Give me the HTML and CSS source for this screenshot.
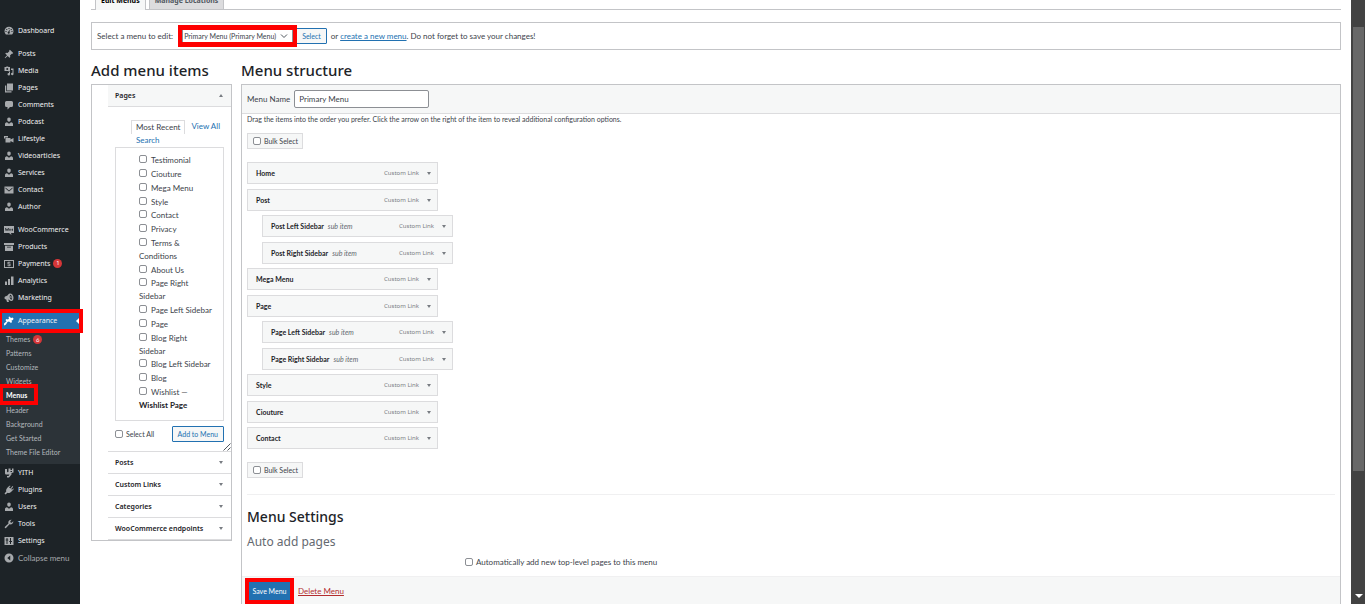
FILE: index.html
```html
<!DOCTYPE html>
<html lang="en">
<head>
<meta charset="utf-8">
<title>Menus</title>
<link rel="stylesheet" href="styles.css">
</head>
<body>
<svg class="sprite" aria-hidden="true">
  <symbol id="i-dash" viewBox="0 0 20 20"><path fill-rule="evenodd" d="M3.8 17A9 9 0 1 1 16.200 17zM9 4h2v2H9zM4.500 6h2v2h-2zM13.500 6h2v2h-2zM3 10h2v2H3zM15 10h2v2h-2zM12 7l-1 5a2 2 0 1 1-2.500-.5z"/></symbol>
  <symbol id="i-pin" viewBox="0 0 20 20"><path d="M10.4 3l1.400-1.500 6.700 6.700-1.500 1.400-1.500-.3-3.500 3.700.5 3-1.500 1.500-3.700-3.700-5 4.700-.9-.9 4.700-5L2.500 9 4 7.500l3 .5 3.700-3.500z"/></symbol>
  <symbol id="i-media" viewBox="0 0 20 20"><path fill-rule="evenodd" d="M1 2h3l1-1h3l1 1h3v8H1zM6.500 4a2 2 0 1 0 0 4 2 2 0 0 0 0-4zM14 5h5v11a2.500 2.500 0 1 1-2-2.400V8h-3zM9 11h3v5.500a2.500 2.500 0 1 1-2-2.400V12H9z"/></symbol>
  <symbol id="i-pages" viewBox="0 0 20 20"><path d="M6 1h12v14H6zM2 5h2.500v11.500H15V19H2z"/></symbol>
  <symbol id="i-comment" viewBox="0 0 20 20"><path d="M5 2h10a3 3 0 0 1 3 3v6a3 3 0 0 1-3 3h-3l-5 5v-5H5a3 3 0 0 1-3-3V5a3 3 0 0 1 3-3z"/></symbol>
  <symbol id="i-user" viewBox="0 0 20 20"><path d="M10 1a3.500 3.500 0 0 1 3.500 4c0 2.500-1.500 4.500-3.500 4.500S6.500 7.500 6.500 5A3.500 3.500 0 0 1 10 1zM6 10.500l4 3 4-3c3 .5 4 2 4 4V18H2v-3.500c0-2 1-3.500 4-4z"/></symbol>
  <symbol id="i-video" viewBox="0 0 20 20"><path d="M0 4h8v3H2v2H0zM3 8h10v3l6-3v9l-6-3v3H3z"/></symbol>
  <symbol id="i-mail" viewBox="0 0 20 20"><path fill-rule="evenodd" d="M1 3h18v14H1zM3 5v2l7 6 7-6V5l-7 6z"/></symbol>
  <symbol id="i-woo" viewBox="0 0 20 20"><path fill-rule="evenodd" d="M0 2h20v14h-6l1 4-5-4H0zM2 6l1.500 6h1L6 9l1.500 3h1L10 6H8.500l-.7 3.500L6.500 7h-1l-1.200 2.500L3.500 6zM12 7c-1.800 0-1.800 5 0 5s1.800-5 0-5zM16.500 7c-1.800 0-1.800 5 0 5s1.800-5 0-5z"/></symbol>
  <symbol id="i-box" viewBox="0 0 20 20"><path fill-rule="evenodd" d="M0 2h20v4H0zM2 7.500h16V18H2zM6 9.500V11h8V9.500z"/></symbol>
  <symbol id="i-pay" viewBox="0 0 20 20"><path fill-rule="evenodd" d="M0 2h20v16H0zM2 4v12h16V4zM9.200 5h1.600v1h2v1.500H9v1.700h4V14h-2.200v1H9.200v-1H7v-1.500h4v-1.700H7V6h2.200z"/></symbol>
  <symbol id="i-chart" viewBox="0 0 20 20"><path d="M14 1h5v17h-5zM8 6h4v12H8zM2 11h4v7H2z"/></symbol>
  <symbol id="i-horn" viewBox="0 0 20 20"><path fill-rule="evenodd" d="M12 1c4 0 7 4 7 8.500s-2 6.500-4 6.500c-2 0-3.500-1.500-5-2.500L8.500 13l1.500 5H6l-1.500-5C2 13 1 11.500 1 9.500S3 6.500 5 6c3-1 4-5 7-5zM12.500 3.500c-2 1.500-1.500 8 2 10 3-1 2-9-2-10zM13 6c2 0 3 4 1.500 5-2-.5-2.500-4-1.500-5z"/></symbol>
  <symbol id="i-brush" viewBox="0 0 20 20"><path d="M9 2l2-1 3 3 3-1 2 2-1 3-3 1 1 3-2 2-4-3-3 1-3 5-3 2-2-2 2-3 4-3L3 8l2-2 3 1 2-2z"/></symbol>
  <symbol id="i-yith" viewBox="0 0 20 20"><path d="M2 2h4v5c0 2 3 2 3 0V1h4v3h3V1h3v8l-4 1v3l-5 6H6v-3h3l2-3H5c-2 0-3-1-3-3zM13 6v2h3V6z"/></symbol>
  <symbol id="i-plug" viewBox="0 0 20 20"><path d="M13 7l4-5 1.500 1.500-4 4.500 1.500 1.500 3-3L19 9l-3.500 3.500C13 16 9 16.500 7 15.500L3 19l-2-2 3.500-4C3.500 10 5 7 8 4l4-3 1 1.500-3 2z"/></symbol>
  <symbol id="i-wrench" viewBox="0 0 20 20"><path d="M16.700 9.300c-1.400 1.500-3.700 1.900-5.600 1.200L4 18c-1 1-3 0-2.500-2L9 9c-.8-2-.4-4.200 1.200-5.800C11.500 1.900 13.500 1.300 15.300 1.700L12.500 4.500l.5 2.500 2.500.5 3-3c.4 1.700-.4 3.500-1.800 4.800z"/></symbol>
  <symbol id="i-set" viewBox="0 0 20 20"><path fill-rule="evenodd" d="M1 2h18v16H1zM5 4v3H3.500v2H5v7h2V9h1.500V7H7V4zM12 4v6h-1.500v2H12v4h2v-4h2v-2h-2V4z"/></symbol>
  <symbol id="i-coll" viewBox="0 0 20 20"><path fill-rule="evenodd" d="M10 1a9 9 0 1 1 0 18 9 9 0 0 1 0-18zM12.500 5L6.500 10l6 5z"/></symbol>
</svg>

<aside class="sidebar">
  <nav>
    <ul class="nav">
      <li><a href="#"><svg><use href="#i-dash"/></svg>Dashboard</a></li>
      <li class="gap"><a href="#"><svg><use href="#i-pin"/></svg>Posts</a></li>
      <li><a href="#"><svg><use href="#i-media"/></svg>Media</a></li>
      <li><a href="#"><svg><use href="#i-pages"/></svg>Pages</a></li>
      <li><a href="#"><svg><use href="#i-comment"/></svg>Comments</a></li>
      <li><a href="#"><svg><use href="#i-user"/></svg>Podcast</a></li>
      <li><a href="#"><svg><use href="#i-video"/></svg>Lifestyle</a></li>
      <li><a href="#"><svg><use href="#i-user"/></svg>Videoarticles</a></li>
      <li><a href="#"><svg><use href="#i-user"/></svg>Services</a></li>
      <li><a href="#"><svg><use href="#i-mail"/></svg>Contact</a></li>
      <li><a href="#"><svg><use href="#i-user"/></svg>Author</a></li>
      <li class="gap"><a href="#"><svg><use href="#i-woo"/></svg>WooCommerce</a></li>
      <li><a href="#"><svg><use href="#i-box"/></svg>Products</a></li>
      <li><a href="#"><svg><use href="#i-pay"/></svg>Payments <span class="count">1</span></a></li>
      <li><a href="#"><svg><use href="#i-chart"/></svg>Analytics</a></li>
      <li><a href="#"><svg><use href="#i-horn"/></svg>Marketing</a></li>
      <li class="gap current"><a href="#"><svg><use href="#i-brush"/></svg>Appearance</a><span class="mark mark-appearance"></span></li>
      <li>
        <ul class="subnav">
          <li><a href="#">Themes <span class="count">6</span></a></li>
          <li><a href="#">Patterns</a></li>
          <li><a href="#">Customize</a></li>
          <li><a href="#">Widgets</a></li>
          <li class="on"><a href="#">Menus</a><span class="mark mark-menus"></span></li>
          <li><a href="#">Header</a></li>
          <li><a href="#">Background</a></li>
          <li><a href="#">Get Started</a></li>
          <li><a href="#">Theme File Editor</a></li>
        </ul>
      </li>
      <li><a href="#"><svg><use href="#i-yith"/></svg>YITH</a></li>
      <li><a href="#"><svg><use href="#i-plug"/></svg>Plugins</a></li>
      <li><a href="#"><svg><use href="#i-user"/></svg>Users</a></li>
      <li><a href="#"><svg><use href="#i-wrench"/></svg>Tools</a></li>
      <li><a href="#"><svg><use href="#i-set"/></svg>Settings</a></li>
      <li><button class="collapse" type="button"><svg><use href="#i-coll"/></svg>Collapse menu</button></li>
    </ul>
  </nav>
</aside>

<main class="main">
  <nav class="tabs">
    <a class="tab active" href="#">Edit Menus</a>
    <a class="tab" href="#">Manage Locations</a>
  </nav>

  <form class="picker">
    <label for="menu">Select a menu to edit:</label>
    <span class="select-wrap">
      <select id="menu"><option>Primary Menu (Primary Menu)</option></select>
      <svg class="chev" viewBox="0 0 8 8"><path d="M1 2.500l3 3 3-3"/></svg>
      <span class="mark mark-select"></span>
    </span>
    <button class="btn" type="button">Select</button>
    <span class="hint">or <a href="#">create a new menu</a>. Do not forget to save your changes!</span>
  </form>

  <div class="columns">
    <section class="add">
      <h2>Add menu items</h2>
      <div class="accordion">
        <h3 class="open"><button type="button">Pages<i class="tri up"></i></button></h3>
        <div class="panel">
          <div class="filters"><a class="sel" href="#">Most Recent</a><a href="#">View All</a><a class="search" href="#">Search</a></div>
          <ul class="checks">
            <li><label><input type="checkbox">Testimonial</label></li>
            <li><label><input type="checkbox">Ciouture</label></li>
            <li><label><input type="checkbox">Mega Menu</label></li>
            <li><label><input type="checkbox">Style</label></li>
            <li><label><input type="checkbox">Contact</label></li>
            <li><label><input type="checkbox">Privacy</label></li>
            <li><label><input type="checkbox">Terms &amp;<br>Conditions</label></li>
            <li><label><input type="checkbox">About Us</label></li>
            <li><label><input type="checkbox">Page Right<br>Sidebar</label></li>
            <li><label><input type="checkbox">Page Left Sidebar</label></li>
            <li><label><input type="checkbox">Page</label></li>
            <li><label><input type="checkbox">Blog Right<br>Sidebar</label></li>
            <li><label><input type="checkbox">Blog Left Sidebar</label></li>
            <li><label><input type="checkbox">Blog</label></li>
            <li><label><input type="checkbox">Wishlist —<br><b>Wishlist Page</b></label></li>
          </ul>
          <div class="panel-foot">
            <label><input type="checkbox">Select All</label>
            <button class="btn" type="button">Add to Menu</button>
          </div>
          <svg class="grip" viewBox="0 0 8 8"><path d="M0.500 7.500l7-7M4.500 7.500l3-3"/></svg>
        </div>
        <h3><button type="button">Posts<i class="tri"></i></button></h3>
        <h3><button type="button">Custom Links<i class="tri"></i></button></h3>
        <h3><button type="button">Categories<i class="tri"></i></button></h3>
        <h3><button type="button">WooCommerce endpoints<i class="tri"></i></button></h3>
      </div>
    </section>

    <section class="structure">
      <h2>Menu structure</h2>
      <div class="box">
        <header class="box-head"><label for="name">Menu Name</label><input id="name" type="text" value="Primary Menu"></header>
        <div class="box-body">
          <p class="drag">Drag the items into the order you prefer. Click the arrow on the right of the item to reveal additional configuration options.</p>
          <label class="bulk"><input type="checkbox">Bulk Select</label>
          <ul class="items">
            <li><b>Home</b><span>Custom Link</span><i class="tri"></i></li>
            <li><b>Post</b><span>Custom Link</span><i class="tri"></i></li>
            <li class="sub"><b>Post Left Sidebar</b><em>sub item</em><span>Custom Link</span><i class="tri"></i></li>
            <li class="sub"><b>Post Right Sidebar</b><em>sub item</em><span>Custom Link</span><i class="tri"></i></li>
            <li><b>Mega Menu</b><span>Custom Link</span><i class="tri"></i></li>
            <li><b>Page</b><span>Custom Link</span><i class="tri"></i></li>
            <li class="sub"><b>Page Left Sidebar</b><em>sub item</em><span>Custom Link</span><i class="tri"></i></li>
            <li class="sub"><b>Page Right Sidebar</b><em>sub item</em><span>Custom Link</span><i class="tri"></i></li>
            <li><b>Style</b><span>Custom Link</span><i class="tri"></i></li>
            <li><b>Ciouture</b><span>Custom Link</span><i class="tri"></i></li>
            <li><b>Contact</b><span>Custom Link</span><i class="tri"></i></li>
          </ul>
          <label class="bulk"><input type="checkbox">Bulk Select</label>
          <div class="settings">
            <h3>Menu Settings</h3>
            <h4>Auto add pages</h4>
            <label class="auto"><input type="checkbox">Automatically add new top-level pages to this menu</label>
          </div>
        </div>
        <footer class="box-foot">
          <span class="save-wrap"><button class="save" type="button">Save Menu</button><span class="mark mark-save"></span></span>
          <a href="#">Delete Menu</a>
        </footer>
      </div>
    </section>
  </div>
</main>
<div class="scrollbar"><div class="thumb"></div><i></i></div>
</body>
</html>
```
FILE: styles.css
```css
* { box-sizing: border-box; }
body {
  margin: 0;
  display: flex;
  height: 100vh;
  overflow: hidden;
  font: 7px/14px "Noto Sans", "Open Sans", sans-serif;
  color: #3c434a;
  background: #fff;
}
ul { list-style: none; margin: 0; padding: 0; }
h2, h3, h4, p { margin: 0; }
a { color: #2271b1; }
button, input, select { font: inherit; color: inherit; margin: 0; }
button { cursor: pointer; }
.sprite { position: absolute; width: 0; height: 0; }

/* Compact and regular running text */
.subnav, .picker select, .btn, .panel-foot, .drag, .bulk, .items, .save { font-family: Lato, "Noto Sans", sans-serif; font-size: 7px; }
.collapse, .picker, .filters, .checks, .box-head, .auto, .box-foot { font-family: Lato, "Noto Sans", sans-serif; font-size: 8px; }

input[type="checkbox"] {
  appearance: none;
  flex: none;
  width: 8px;
  height: 8px;
  border: 1px solid #8c8f94;
  border-radius: 2px;
  background: #fff;
}

.mark { position: absolute; border: 4px solid #fe0000; pointer-events: none; z-index: 2; }
.mark-appearance { inset: -3px -3px -4px -2px; }
.mark-menus { inset: -4px 42px -3px -1px; }
.mark-select { inset: -3px -4px -3px -4px; border-width: 5px 4px; }
.mark-save { inset: -4px; }

/* Sidebar */
.sidebar { flex: none; width: 80px; padding-top: 22px; background: #1d2327; }
.nav a, .collapse {
  display: flex;
  align-items: center;
  height: 17px;
  padding: 0 0 0 4px;
  color: #f0f0f1;
  text-decoration: none;
  white-space: nowrap;
}
.nav svg { flex: none; width: 10px; height: 10px; margin-right: 4px; fill: #a7aaad; }
.gap { margin-top: 6px; }
.nav .collapse { border: 0; background: none; color: #a7aaad; font-size: 8px; }
.count {
  width: 9px;
  height: 9px;
  margin-left: 3px;
  border-radius: 50%;
  background: #d63638;
  color: #fff;
  font-size: 6px;
  line-height: 9px;
  text-align: center;
}
.current { position: relative; background: #2271b1; }
.nav .current svg { fill: #fff; }
.current::after {
  content: "";
  position: absolute;
  right: 0;
  top: 5px;
  border: 4px solid transparent;
  border-right-color: #fff;
  border-left: 0;
}
.nav .subnav { padding: 3px 0 5px; background: #2c3338; }
.nav .subnav a { height: 14px; padding-left: 6px; color: #b4b9be; }
.subnav li { position: relative; }
.nav .subnav .on a { color: #fff; font-weight: 700; }
.subnav .on { margin-bottom: 1px; }

/* Main */
.main { flex: 1; min-width: 0; padding: 0 10px 0 11px; }
.tabs {
  display: flex;
  gap: 3px;
  margin-top: -6px;
  padding: 0 4px;
  border-bottom: 1px solid #c3c4c7;
}
.tab {
  height: 15px;
  padding: 0 5px;
  border: 1px solid #c3c4c7;
  border-bottom: 0;
  background: #dcdcde;
  color: #50575e;
  font-weight: 700;
  line-height: 12px;
  text-decoration: none;
}
.tab.active { height: 16px; margin-bottom: -1px; background: #f6f7f7; color: #000; }

.picker {
  display: flex;
  align-items: center;
  height: 28px;
  margin-top: 12px;
  padding: 0 5px;
  border: 1px solid #c3c4c7;
}
.select-wrap { position: relative; margin-left: 9px; }
.picker select {
  display: block;
  appearance: none;
  width: 111px;
  height: 16px;
  padding: 0 0 0 1px;
  border: 1px solid #8c8f94;
  border-radius: 0;
  background: #fff;
}
.chev { position: absolute; right: 5px; top: 4px; width: 8px; height: 8px; fill: none; stroke: #50575e; }
.btn {
  height: 16px;
  padding: 0 5px;
  border: 1px solid #2271b1;
  border-radius: 1px;
  background: #f6f7f7;
  color: #2271b1;
  line-height: 12px;
}
.picker .btn { margin-left: 3px; }
.hint { margin-left: 4px; white-space: nowrap; }

.columns { display: flex; gap: 9px; margin-top: 10px; }
h2 { height: 24px; font-size: 15px; line-height: 20px; font-weight: 500; color: #1d2327; white-space: nowrap; }
.add { flex: none; width: 141px; }
.accordion { padding-left: 16px; border: 1px solid #c3c4c7; }
.accordion h3 { font-size: 7px; border-bottom: 1px solid #dcdcde; }
.accordion h3 button {
  display: flex;
  align-items: center;
  justify-content: space-between;
  width: 100%;
  height: 21px;
  padding: 0 8px 0 7px;
  border: 0;
  background: #fff;
  font-weight: 600;
  color: #1d2327;
}
.accordion .open button { background: #f6f7f7; }
.tri { border: 2px solid transparent; border-top: 3px solid #787c82; border-bottom: 0; }
.tri.up { border-bottom: 3px solid #787c82; border-top: 0; }

.panel { position: relative; padding: 13px 7px 9px; border-bottom: 1px solid #dcdcde; }
.filters { display: flex; flex-wrap: wrap; padding-left: 16px; line-height: 13px; }
.filters a { text-decoration: none; white-space: nowrap; }
.filters .sel { padding: 0 4px; border: 1px solid #dcdcde; border-bottom: 0; color: #3c434a; margin-right: 6px; }
.filters .search { flex-basis: 100%; padding-left: 5px; line-height: 12px; }
.checks { margin-top: 1px; padding: 6px 0 7px 23px; border: 1px solid #dcdcde; }
.checks li { margin-bottom: 1px; line-height: 13px; white-space: nowrap; }
.checks li:nth-child(4n) { margin-bottom: 0; }
.checks input { margin-right: 4px; }
.checks b { color: #1d2327; }
.panel-foot { display: flex; align-items: center; justify-content: space-between; margin-top: 5px; }
.panel-foot label, .bulk, .auto { display: flex; align-items: center; }
.panel-foot input { margin-right: 3px; }
.grip { position: absolute; right: 0; bottom: 0; width: 8px; height: 8px; stroke: #50575e; }

.structure { flex: 1; min-width: 0; }
.box { border: 1px solid #c3c4c7; }
.box-head {
  display: flex;
  align-items: center;
  height: 29px;
  padding: 0 5px;
  border-bottom: 1px solid #dcdcde;
  background: #f6f7f7;
}
.box-head input {
  width: 135px;
  height: 18px;
  margin-left: 4px;
  padding: 0 4px;
  border: 1px solid #8c8f94;
  border-radius: 2px;
  background: #fff;
}
.box-body { padding: 0 5px; }
.drag { height: 19px; line-height: 11px; }
.bulk { width: 56px; height: 16px; padding: 0 5px; border: 1px solid #dcdcde; background: #f6f7f7; white-space: nowrap; }
.bulk input { margin-right: 3px; }
.items { padding: 13px 0 8px; }
.items li {
  display: flex;
  align-items: center;
  width: 191px;
  height: 22px;
  margin-bottom: 5px;
  padding: 0 6px 0 8px;
  border: 1px solid #dcdcde;
  background: #f6f7f7;
}
.items li:nth-child(even) { margin-bottom: 4px; }
.items .sub { margin-left: 15px; }
.items b { color: #1d2327; }
.items em { margin-left: 4px; color: #646970; }
.items span { margin-left: auto; font-family: "Noto Sans", sans-serif; font-size: 6px; color: #787c82; }
.items .tri { margin-left: 8px; }
.settings { margin-top: 16px; padding: 11px 0 7px; border-top: 1px solid #f0f0f1; }
.settings h3 { font-size: 14px; line-height: 22px; font-weight: 500; color: #1d2327; }
.settings h4 { margin-top: 3px; font-size: 12px; line-height: 22px; font-weight: 400; color: #646970; }
.auto { margin: 2px 0 0 218px; }
.auto input { margin-right: 3px; }
.box-foot {
  display: flex;
  align-items: center;
  height: 28px;
  padding: 0 7px;
  border-top: 1px solid #f0f0f1;
  background: #f6f7f7;
}
.box-foot a { margin-left: 8px; color: #b32d2e; }
.save-wrap { position: relative; }
.save { display: block; height: 18px; padding: 0; width: 41px; border: 0; background: #2271b1; color: #fff; }

.scrollbar { position: relative; flex: none; width: 14px; padding: 27px 1px 0 2px; background: #424242; }
.thumb { height: 77%; background: #686868; }
.scrollbar i {
  position: absolute;
  left: 4px;
  bottom: 6px;
  border: 4px solid transparent;
  border-top-color: #fff;
  border-bottom: 0;
}
```
